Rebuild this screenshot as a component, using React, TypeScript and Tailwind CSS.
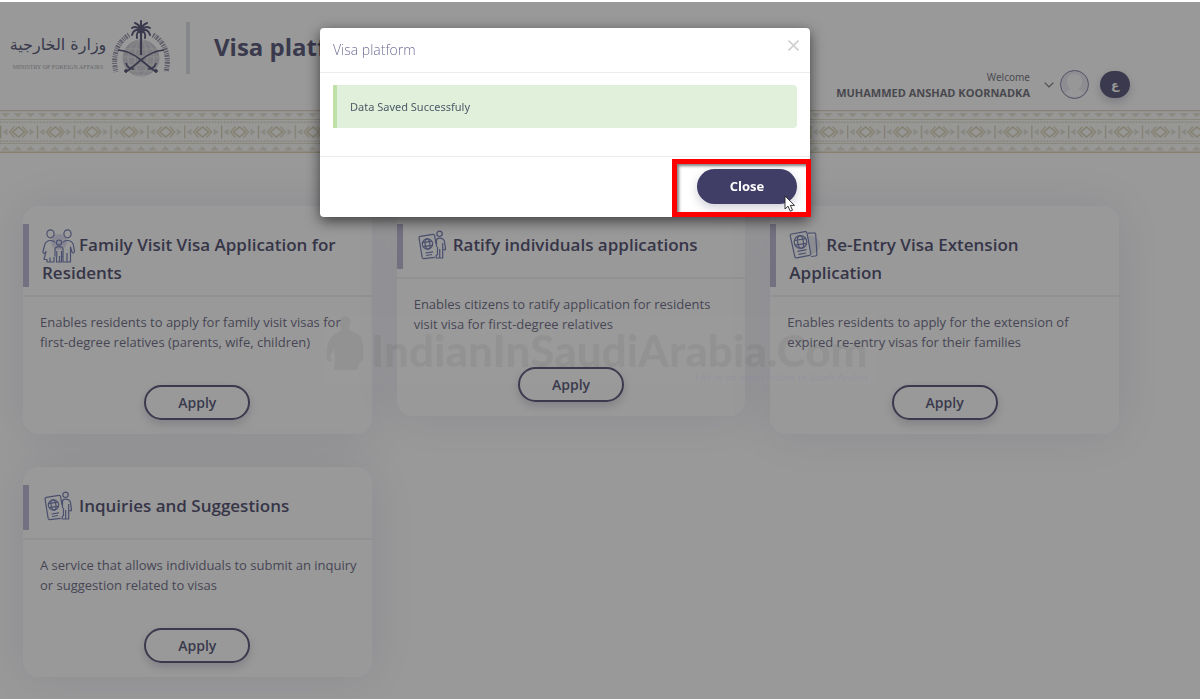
import type { ReactNode } from 'react';
import { useState } from 'react';

type IconName = 'family' | 'ratify' | 'passport';

interface Service {
  title: string;
  description: string;
  icon: IconName;
}

const SERVICES: Service[] = [
  {
    title: 'Family Visit Visa Application for Residents',
    description: 'Enables residents to apply for family visit visas for first-degree relatives (parents, wife, children)',
    icon: 'family'
  },
  {
    title: 'Ratify individuals applications',
    description: 'Enables citizens to ratify application for residents visit visa for first-degree relatives',
    icon: 'ratify'
  },
  {
    title: 'Re-Entry Visa Extension Application',
    description: 'Enables residents to apply for the extension of expired re-entry visas for their families',
    icon: 'passport'
  },
  {
    title: 'Inquiries and Suggestions',
    description: 'A service that allows individuals to submit an inquiry or suggestion related to visas',
    icon: 'ratify'
  }
];

const ICONS: Record<IconName, ReactNode> = {
  family: (
    <>
      <circle cx="17" cy="13" r="8" fill="#dcdcf0" stroke="none" />
      <ellipse cx="8.5" cy="4.8" rx="3.6" ry="4" />
      <ellipse cx="25.5" cy="4.8" rx="3.6" ry="4" />
      <circle cx="17" cy="13.6" r="2.6" />
      <path d="M13 13.5c-1-1.600-2.200-2-4-2-4.500 0-6 2-6.500 5L1 22.500c-.5 1.500 1.500 2.500 2.500 1l.5-1-2 8h3V33h3v-4.500M8 33h4v-5" />
      <path d="M21 13.500c1-1.600 2.200-2 4-2 4.500 0 6 2 6.500 5l1 6c0 1.800-2 2-2.500.5l-1.500-5V33h-3.500v-9M25 33h-4v-5" />
      <path d="M13 27.500v-7c0-2 1.200-2.900 4-2.900s4 .9 4 2.900v7h-1.500V33h-2v-6M14.500 27.500V33h3M14.800 22v5.500M19.500 22v5.500" />
    </>
  ),
  ratify: (
    <>
      <path d="M20 15l-1.400-8.300c-.2-1-.8-1.400-1.700-1.300L4.300 7.400c-1 .2-1.400.8-1.200 1.800l3 19c.2 1 .8 1.500 1.800 1.400l11-1.300" />
      <circle cx="11.500" cy="15" r="5.200" />
      <ellipse cx="11.500" cy="15" rx="2.400" ry="5.200" transform="rotate(-9 11.500 15)" />
      <path d="M6.800 13.600l8.800-1.400M7.200 17.700l8.800-1.400M9.500 24l7.500-1.200M10 26.500l6-1" />
      <circle cx="23.500" cy="4.800" r="2.700" />
      <path d="M20.500 18v-6.500c0-1.600.9-2.300 3-2.300 3.300 0 4.500 1 5 3.500l1 7c.1 1.400-1.300 1.600-1.700.3M26.700 14v15h-6.500v-2.500l1.300-1V18M23.700 20v9" />
    </>
  ),
  passport: (
    <>
      <circle cx="22" cy="16" r="9" fill="#e4e4f2" stroke="none" />
      <path d="M19 4.200l6-.4c1-.1 1.600.4 1.700 1.400l1.200 20c.1 1-.4 1.700-1.400 1.800l-4.500.5" />
      <path d="M2.500 5L16 2.600c1-.2 1.800.3 2 1.300l3.700 20.600c.2 1-.3 1.700-1.300 1.900L7.800 28.900c-1 .2-1.800-.3-2-1.300L1.300 7C1.100 6 1.500 5.200 2.500 5z" fill="#fff" />
      <circle cx="11.500" cy="13" r="6.300" />
      <ellipse cx="11.500" cy="13" rx="2.900" ry="6.300" transform="rotate(-9 11.500 13)" />
      <path d="M5.700 11.500L16.600 9.700M6.300 16.200L17 14.400M8.500 22.300l9-1.600M9.500 25.300l7.500-1.300" />
    </>
  )
};

function ServiceIcon({ name }: { name: IconName }) {
  return (
    <svg
      viewBox="0 0 33 34"
      className="-my-2 mr-1 inline-block h-[34px] w-[33px] align-middle"
      fill="none"
      stroke="#616ba8"
      strokeWidth="1.200"
      strokeLinejoin="round"
      aria-hidden="true"
    >
      {ICONS[name]}
    </svg>
  );
}

function Emblem() {
  return (
    <svg viewBox="0 0 58 58" className="h-[58px] w-[58px]" fill="none" stroke="#403e66" aria-hidden="true">
      <circle cx="29" cy="39" r="18.500" fill="#c8c9d0" stroke="none" />
      <g stroke="#f1f1f5" strokeWidth=".6">
        <ellipse cx="29" cy="39" rx="6" ry="18" />
        <ellipse cx="29" cy="39" rx="13" ry="18" />
        <path d="M13 30h32M11 38h36M13 46h32M18 52h22" />
      </g>
      <path d="M17 16C5 23 0 37 4 53" strokeWidth="5" strokeDasharray="1 1.200 1.800 .8 .8 1" opacity=".65" />
      <path d="M41 16c12 7 17 21 13 37" strokeWidth="5" strokeDasharray="1.400 1 .8 .8 1.800 1.200" opacity=".65" />
      <path d="M29 12v24" strokeWidth="2.200" />
      <g strokeWidth="2" strokeLinecap="round">
        <path d="M29 11c-3-3-6-4-9-2M29 11c3-3 6-4 9-2M29 11c-4-1-8 0-9 5M29 11c4-1 8 0 9 5M29 11c-3 1-5 4-4 8M29 11c3 1 5 4 4 8M29 11c-1-4-3-6-6-7M29 11c1-4 3-6 6-7M29 11V2" />
      </g>
      <circle cx="29" cy="11" r="3.500" fill="#403e66" stroke="none" />
      <path d="M6 31c10 1 17 5 23 10 5 4 9 8 14 11M52 31c-10 1-17 5-23 10-5 4-9 8-14 11" strokeWidth="1.700" />
      <path d="M36 50c4 0 7-2 8-6M22 50c-4 0-7-2-8-6" strokeWidth="1.700" />
      <circle cx="44" cy="52" r="1.400" fill="#403e66" />
      <circle cx="14" cy="52" r="1.400" fill="#403e66" />
    </svg>
  );
}

function PatternBand() {
  return (
    <svg className="block h-[43px] w-full" aria-hidden="true">
      <defs>
        <pattern id="band" width="36.830" height="43" patternUnits="userSpaceOnUse">
          <rect width="36.830" height="43" fill="#fbfbf9" />
          <path d="M0 .5h37" stroke="#d9cfbd" strokeWidth="1.500" />
          <path d="M0 9.500h37M0 33.500h37" stroke="#dfd9c2" strokeWidth="1" />
          <path d="M0 42.300h37" stroke="#dad0a8" strokeWidth="1.400" />
          <path d="M0 12.200h37M0 31.200h37" stroke="#d8d3bd" strokeWidth="1.500" strokeDasharray="1.700 1.368" />
          <path d="M1 3h9L5.500 7.500zM13.500 3h9L18 7.500zM26 3h9l-4.500 4.500zM1 40.500h9L5.500 36zM13.500 40.500h9L18 36zM26 40.500h9L30.500 36z" fill="#e2dfd0" />
          <path d="M.6 15.500v13" stroke="#cfc8a8" strokeWidth="1.300" />
          <path d="M2.500 22l5-3.500v7zM34.500 22l-5-3.500v7z" fill="#dcdbce" />
          <path d="M14.500 16.500L9.500 22l5 5.500M22.500 16.500l5 5.500-5 5.500" fill="none" stroke="#d6cfb0" strokeWidth="1.300" />
          <path d="M12.500 22l6-5 6 5-6 5z" fill="none" stroke="#d2caa8" strokeWidth="1.500" />
        </pattern>
      </defs>
      <rect width="100%" height="43" fill="url(#band)" />
    </svg>
  );
}

function Header() {
  return (
    <header className="flex h-[110px] justify-between pl-[10px] pr-[70px]">
      <div className="flex items-start pt-[19px]">
        <div className="flex w-24 flex-col items-center pt-2">
          <span
            dir="rtl"
            lang="ar"
            className="whitespace-nowrap font-['DejaVu_Sans','Noto_Sans',sans-serif] text-[16px] leading-9 text-[#403e66]"
          >
            وزارة الخارجية
          </span>
          <span className="whitespace-nowrap font-['Liberation_Serif',serif] text-[6px] leading-2 text-[#9c9ca6]">
            MINISTRY OF FOREIGN AFFAIRS
          </span>
        </div>
        <div className="ml-[6px]">
          <Emblem />
        </div>
        <div className="ml-4 mt-[3px] h-[52px] w-1 bg-[#d7dbe1]" />
        <h1 className="ml-6 mt-2 text-2xl font-bold leading-10 text-[#403e66]">Visa platform</h1>
      </div>
      <div className="flex items-start pt-[70px]">
        <div className="flex flex-col items-end">
          <span className="font-['Noto_Sans',sans-serif] text-[10px] leading-[14px] text-[#62626f]">Welcome</span>
          <span className="text-[11px] font-bold leading-[18px] text-[#5c5c69]">MUHAMMED ANSHAD KOORNADKA</span>
        </div>
        <button type="button" aria-label="Account menu" className="ml-[14px] flex items-center gap-[6px]">
          <svg viewBox="0 0 10 6" className="h-[6px] w-[10px]" fill="none" stroke="#62626f" strokeWidth="1.200" aria-hidden="true">
            <path d="M.6.6L5 5 9.400.6" />
          </svg>
          <svg viewBox="0 0 29 29" className="h-[29px] w-[29px]" aria-hidden="true">
            <circle cx="14.500" cy="14.500" r="14" fill="#e9e9f1" stroke="#716f98" />
            <path d="M14.500 4c5 0 7.500 3 7.500 7.500 0 4-2 6-4 7.500l6 3.500c-5 6-14 6-19 0l6-3.500c-2-1.500-4-3.500-4-7.500C7 7 9.500 4 14.500 4z" fill="#fafafd" />
          </svg>
        </button>
        <button
          type="button"
          lang="ar"
          aria-label="العربية"
          className="ml-[11px] mt-px h-[27px] w-[30px] rounded-full bg-[#403e66] font-['DejaVu_Sans',sans-serif] text-[12px] font-bold leading-4 text-white shadow-[0_4px_10px_rgba(64,62,102,0.3)]"
        >
          ع
        </button>
      </div>
    </header>
  );
}

function ServiceCard({ service }: { service: Service }) {
  return (
    <article className="rounded-[16px] bg-white pb-[14px] pt-[18px]">
      <h2 className="min-h-[45px] border-l-[6px] border-[#b3afce] pl-[13px] pr-5 pt-[7px] text-[17px] font-semibold leading-7 text-[#38365c]">
        <ServiceIcon name={service.icon} />
        {service.title}
      </h2>
      <hr className="mt-2 border-t-2 border-[#eeeef2]" />
      <p className="mt-[15px] pl-[17px] pr-[11px] text-[13px] leading-5 text-[#595775]">{service.description}</p>
      <div className="mt-[33px] flex justify-center">
        <button
          type="button"
          className="h-[35px] w-[106px] rounded-full border-2 border-[#403e66] text-sm font-semibold text-[#403e66] shadow-[0_4px_10px_rgba(64,62,102,0.25)]"
        >
          Apply
        </button>
      </div>
    </article>
  );
}

function SavedDialog({ onClose }: { onClose: () => void }) {
  return (
    <div className="fixed inset-x-0 bottom-0 top-[2px] flex items-start justify-center bg-[#333]/50 pr-[70px] pt-[26px]">
      <div
        role="dialog"
        aria-modal="true"
        aria-labelledby="dialog-title"
        className="relative w-[490px] rounded bg-white shadow-[0_4px_14px_rgba(0,0,0,0.6)]"
      >
        <div className="flex items-start justify-between border-b border-[#ececec] py-3 pl-[13px] pr-[11px]">
          <h2 id="dialog-title" className="text-sm font-light leading-5 text-[#716f98]">
            Visa platform
          </h2>
          <button type="button" aria-label="Dismiss" onClick={onClose}>
            <svg viewBox="0 0 11 11" className="h-[11px] w-[11px]" stroke="#cfcfcf" strokeWidth="1.600" aria-hidden="true">
              <path d="M.5.5l10 10M10.500.5l-10 10" />
            </svg>
          </button>
        </div>
        <div className="px-[13px] pb-7 pt-3">
          <div
            role="status"
            className="rounded-r border-l-4 border-[#bfe0a6] bg-[#e1f0db] px-[13px] py-3 font-['Noto_Sans',sans-serif] text-[11px] leading-[19px] text-[#4c5a68]"
          >
            Data Saved Successfuly
          </div>
        </div>
        <div className="flex justify-end border-t border-[#ececec] px-[13px] pb-[13px] pt-3">
          <button
            type="button"
            onClick={onClose}
            className="h-[35px] w-[100px] rounded-full bg-[#403e66] text-[13px] font-bold text-white shadow-[0_4px_10px_rgba(64,62,102,0.25)]"
          >
            Close
          </button>
        </div>
        <div className="pointer-events-none absolute -right-px bottom-0 h-[58px] w-[139px] border-[5px] border-[#fe0000] shadow-[inset_2px_2px_3px_rgba(0,0,0,0.5)]" />
        <svg viewBox="0 0 12 18" className="pointer-events-none absolute bottom-1 right-[14px] h-[18px] w-3" aria-hidden="true">
          <path d="M1 1v13l3-2.800 2.300 5 2.200-1-2.200-4.800h4.200z" fill="#fff" stroke="#222" strokeWidth=".9" />
        </svg>
      </div>
    </div>
  );
}

function Watermark() {
  return (
    <div className="pointer-events-none fixed left-[325px] top-[315px] flex h-[69px] w-[551px] items-start bg-white/[0.015]">
      <svg viewBox="0 0 40 56" className="h-[56px] w-10 shrink-0" fill="#000" fillOpacity=".055" aria-hidden="true">
        <path d="M20 1c4 0 6 3 5.500 7-.3 3-1.500 4.500-2 6.500 3 2 8 3 11 6 3 4 4 10 4 17 0 5 0 10-4 10l-2.500 7.500H9L10 42l-1-8-4 7 2 6c-5 0-6-5-5.500-9 0-8 3-14 6-17 3-3 7-4 9-6-.5-2-2-3.500-2-7C14.500 4 16 1 20 1z" />
      </svg>
      <div className="ml-[6px] flex flex-col items-end pt-3">
        <span className="whitespace-nowrap font-['Lato',sans-serif] text-[44px] font-black leading-[46px] text-black/[0.055]">
          IndianInSaudiArabia.Com
        </span>
        <span className="font-['Liberation_Serif',serif] text-[11px] italic leading-2 text-[#8486a4]/30">
          Life of an expat Indian In Saudi Arabia
        </span>
      </div>
    </div>
  );
}

export default function App() {
  const [isOpen, setIsOpen] = useState(true);

  return (
    <div className="min-h-screen overflow-hidden bg-white font-['Open_Sans','Noto_Sans',sans-serif]">
      <Header />
      <PatternBand />
      <main className="grid grid-cols-3 items-start gap-x-[25px] gap-y-[33px] pb-5 pl-[23px] pr-[81px] pt-[53px]">
        {SERVICES.map((service) => (
          <div key={service.title} className="rounded-[16px] shadow-[0_0_50px_rgba(64,62,140,0.14)]">
            <ServiceCard service={service} />
          </div>
        ))}
      </main>
      {isOpen && <SavedDialog onClose={() => setIsOpen(false)} />}
      <Watermark />
    </div>
  );
}
